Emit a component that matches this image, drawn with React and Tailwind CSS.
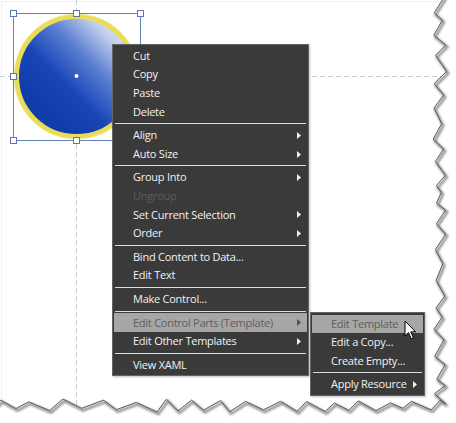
import React from 'react';

const mainItems = [
  { label: 'Cut' },
  { label: 'Copy' },
  { label: 'Paste' },
  { label: 'Delete' },
  'sep',
  { label: 'Align', sub: true },
  { label: 'Auto Size', sub: true },
  'sep',
  { label: 'Group Into', sub: true },
  { label: 'Ungroup', disabled: true },
  { label: 'Set Current Selection', sub: true },
  { label: 'Order', sub: true },
  'sep',
  { label: 'Bind Content to Data...' },
  { label: 'Edit Text' },
  'sep',
  { label: 'Make Control...' },
  'sep',
  { label: 'Edit Control Parts (Template)', sub: true, active: true },
  { label: 'Edit Other Templates', sub: true },
  'sep',
  { label: 'View XAML' },
];

const subItems = [
  { label: 'Edit Template', active: true },
  { label: 'Edit a Copy...' },
  { label: 'Create Empty...' },
  'sep',
  { label: 'Apply Resource', sub: true },
];

const Arrow = ({ color }) => (
  <svg width="4" height="7" viewBox="0 0 4 7">
    <polygon points="0,0 4,3.5 0,7" fill={color} />
  </svg>
);

const MenuList = ({ items }) => (
  <div className="flex flex-col py-[1.5px] px-px">
    {items.map((it, i) =>
      it === 'sep' ? (
        <div key={i} className="h-[4.9px] flex items-center px-px">
          <div className="h-px w-full bg-[#dcdcdc]" />
        </div>
      ) : (
        <div
          key={i}
          className={
            'h-[18.67px] flex items-center justify-between pl-[19px] pr-[6px] ' +
            (it.active ? 'bg-[#a6a6a6] text-[#5e5e5e]' : it.disabled ? 'text-[#5a5a5a]' : 'text-[#f2f2f2]')
          }
        >
          <span className="whitespace-nowrap">{it.label}</span>
          {it.sub && <Arrow color={it.active ? '#505050' : '#f0f0f0'} />}
        </div>
      )
    )}
  </div>
);

// deterministic jagged edge
function tornPath() {
  let s = 11;
  const rnd = () => {
    s = (s * 9301 + 49297) % 233280;
    return s / 233280;
  };
  const pts = [];
  let y = -4;
  let flip = false;
  while (y < 400) {
    pts.push([flip ? 433 + rnd() * 4 : 441 + rnd() * 6, y]);
    y += 6 + rnd() * 12;
    flip = !flip;
  }
  pts.push([446, 404]);
  let x = 440;
  flip = true;
  while (x > -4) {
    pts.push([x, flip ? 399 + rnd() * 4 : 408 + rnd() * 4]);
    x -= 8 + rnd() * 14;
    flip = !flip;
  }
  pts.push([-4, 406]);
  return pts;
}

const Torn = () => {
  const pts = tornPath();
  const line = 'M' + pts.map((p) => p[0].toFixed(1) + ' ' + p[1].toFixed(1)).join(' L');
  const outer = line + ' L-10 430 L470 430 L470 -10 Z';
  return (
    <svg className="absolute left-0 top-0" width="456" height="423">
      <defs>
        <filter id="blur" x="-10%" y="-10%" width="120%" height="120%">
          <feGaussianBlur stdDeviation="1.2" />
        </filter>
      </defs>
      <path d={outer} fill="#ffffff" />
      <path d={line} fill="none" stroke="#8a8a8a" strokeWidth="2.5" transform="translate(1.5 2)" filter="url(#blur)" />
      <path d={line} fill="none" stroke="#5a5a5a" strokeWidth="1" />
    </svg>
  );
};

const Canvas = () => (
  <svg className="absolute left-0 top-0" width="456" height="423">
    <defs>
      <linearGradient id="ball" x1="0" y1="1" x2="1" y2="0">
        <stop offset="0" stopColor="#0a34a0" />
        <stop offset="0.42" stopColor="#1846b6" />
        <stop offset="0.62" stopColor="#5b7fd2" />
        <stop offset="0.8" stopColor="#c3cfeb" />
        <stop offset="0.95" stopColor="#f6f7fb" />
      </linearGradient>
    </defs>
    <rect x="1.5" y="1.5" width="450" height="420" fill="none" stroke="#f0f0f0" />
    <line x1="76.5" y1="0" x2="76.5" y2="423" stroke="#cfcfcf" strokeDasharray="5 3" />
    <line x1="0" y1="76.5" x2="456" y2="76.5" stroke="#cfcfcf" strokeDasharray="5 3" />
    <circle cx="76.5" cy="76.5" r="60" fill="url(#ball)" stroke="#e9dc58" strokeWidth="5" />
    <circle cx="76.5" cy="76.5" r="62.5" fill="none" stroke="#f2ec9c" strokeWidth="0.8" />
    <circle cx="76.5" cy="76" r="2" fill="#ffffff" />
    <rect x="13.5" y="13.5" width="127" height="127" fill="none" stroke="#6582bd" />
    {[
      [13.5, 13.5],
      [76.5, 13.5],
      [140.5, 13.5],
      [13.5, 76.5],
      [13.5, 140.5],
      [76.5, 140.5],
    ].map(([x, y], i) => (
      <rect key={i} x={x - 3} y={y - 3} width="6" height="6" fill="#ffffff" stroke="#5677b8" />
    ))}
  </svg>
);

const Cursor = () => (
  <svg className="absolute left-[404px] top-[320px]" width="14" height="21" viewBox="0 0 14 21">
    <path
      d="M1 1 L1 16 L4.5 12.6 L7.2 18.8 L9.4 17.8 L6.8 11.8 L11.6 11.8 Z"
      fill="#ffffff"
      stroke="#000000"
      strokeWidth="1"
      strokeLinejoin="round"
    />
  </svg>
);

export default function App() {
  return (
    <div
      className="relative w-[456px] h-[423px] bg-white overflow-hidden text-[11px] tracking-[-0.25px]"
      style={{ fontFamily: '"Open Sans", "Noto Sans", sans-serif' }}
    >
      <Canvas />
      <div className="absolute left-[112px] top-[44px] w-[197px] h-[332px] bg-[#3a3a3a] border border-[#646464] shadow-[1px_1px_2px_rgba(0,0,0,0.25)]">
        <MenuList items={mainItems} />
      </div>
      <div className="absolute left-[310px] top-[312px] w-[115px] h-[84px] bg-[#3a3a3a] border border-[#646464] shadow-[1px_1px_2px_rgba(0,0,0,0.25)]">
        <MenuList items={subItems} />
      </div>
      <Cursor />
      <Torn />
    </div>
  );
}
